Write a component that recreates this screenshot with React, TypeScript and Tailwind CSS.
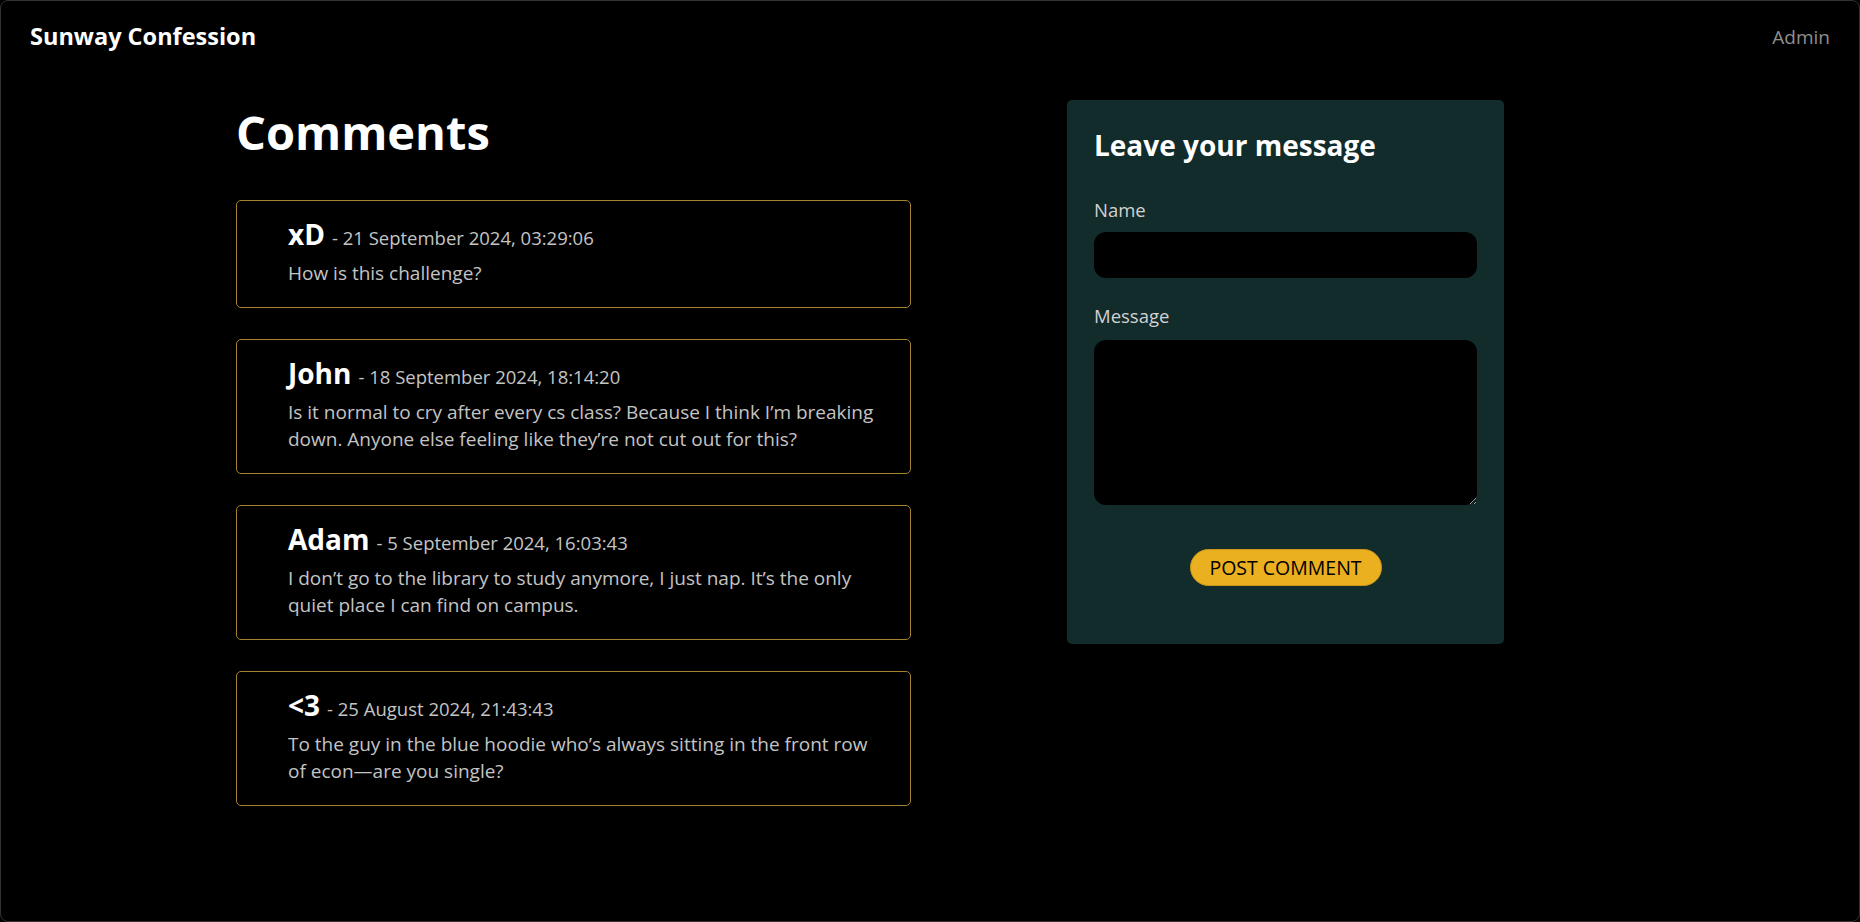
import React from "react";

type Comment = {
  name: string;
  date: string;
  body: string;
};

const comments: Comment[] = [
  {
    name: "xD",
    date: "21 September 2024, 03:29:06",
    body: "How is this challenge?",
  },
  {
    name: "John",
    date: "18 September 2024, 18:14:20",
    body: "Is it normal to cry after every cs class? Because I think I’m breaking down. Anyone else feeling like they’re not cut out for this?",
  },
  {
    name: "Adam",
    date: "5 September 2024, 16:03:43",
    body: "I don’t go to the library to study anymore, I just nap. It’s the only quiet place I can find on campus.",
  },
  {
    name: "<3",
    date: "25 August 2024, 21:43:43",
    body: "To the guy in the blue hoodie who’s always sitting in the front row of econ—are you single?",
  },
];

function CommentCard({ c }: { c: Comment }) {
  return (
    <div className="rounded-[5px] border border-[#a5822f] pl-[51px] pr-[30px] pt-[18px] pb-5">
      <div className="flex items-baseline h-[30px] mb-[11px] leading-[30px]">
        <span className="text-[28px] font-bold text-white">{c.name}</span>
        <span className="ml-[7px] text-[18.5px] text-[#c4c4c4]">- {c.date}</span>
      </div>
      <p className="text-[19px] leading-[27px] text-[#c4c4c4]">{c.body}</p>
    </div>
  );
}

export default function App() {
  return (
    <div className="h-[922px] bg-black font-['Open_Sans',sans-serif]">
      <div className="h-full overflow-hidden rounded-[8px] border border-[#333333] bg-black">
        {/* navbar */}
        <div className="flex items-center justify-between h-[72px] px-[29px]">
          <span className="text-[23.5px] font-bold text-white">Sunway Confession</span>
          <span className="text-[19px] text-[#8f8f8f]">Admin</span>
        </div>

        <div className="flex items-start pl-[235px] pt-[27px]">
          {/* comments list */}
          <div className="w-[675px]">
            <h1 className="text-[47px] font-bold leading-[64px] text-white mb-[36px]">Comments</h1>
            <div className="flex flex-col gap-[31px]">
              {comments.map((c) => (
                <CommentCard key={c.name} c={c} />
              ))}
            </div>
          </div>

          {/* form */}
          <div className="ml-[156px] w-[437px] rounded-[5px] bg-[#122b2b] px-[27px] pt-[28px] pb-[58px]">
            <h2 className="text-[28px] font-bold leading-[34px] text-white mb-[34px]">
              Leave your message
            </h2>
            <label className="block text-[18.5px] leading-[27px] text-[#d2d2d2] mb-[9px]">Name</label>
            <input
              type="text"
              className="block w-full h-[46px] rounded-[12px] bg-black text-white px-3 outline-none mb-[24px]"
            />
            <label className="block text-[18.5px] leading-[27px] text-[#d2d2d2] mb-[11px]">Message</label>
            <textarea className="block w-full h-[165px] rounded-[12px] bg-black text-white px-3 py-2 outline-none" />
            <div className="flex justify-center mt-[44px]">
              <button
                type="button"
                className="w-[192px] h-[37px] rounded-full border border-[#c9961c] bg-[#ebb020] text-[19.5px] text-black"
              >
                POST COMMENT
              </button>
            </div>
          </div>
        </div>
      </div>
    </div>
  );
}
